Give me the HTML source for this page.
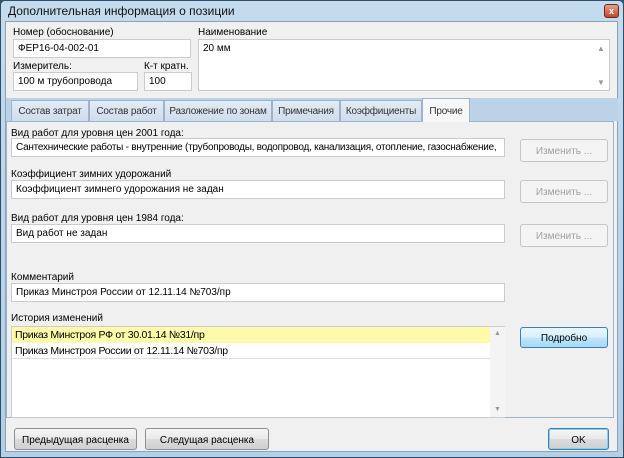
<!DOCTYPE html>
<html><head><meta charset="utf-8"><style>
*{margin:0;padding:0;box-sizing:border-box}
body{width:624px;height:458px;overflow:hidden;background:#2a5a78;font-family:"Liberation Sans","Noto Sans CJK SC",sans-serif;font-size:10px;color:#000}
.a{position:absolute;white-space:nowrap}
.win{position:absolute;left:0;top:0;width:624px;height:458px;background:linear-gradient(#c4dbed,#b4cfe6);border:1px solid #2d4e66;border-radius:5px 5px 0 0}
.client{position:absolute;left:5px;top:21px;width:613px;height:431px;background:#f0f0f0;border:1px solid #8aa3b8}
.inp{position:absolute;background:#fff;border:1px solid #c8ccd0;padding:3px 4px;white-space:nowrap;overflow:hidden}
.btn{position:absolute;border:1px solid #8e8f8f;border-radius:3px;background:linear-gradient(#f5f5f5 0,#e9e9e9 50%,#dcdcdc 51%,#d0d0d0);text-align:center;white-space:nowrap}
.dis{border-color:#c5c5c5;background:#f4f4f4;color:#a0a0a0}
.tab{position:absolute;top:100px;height:21px;border:1px solid #9fb3c8;border-bottom:none;background:linear-gradient(#e2ecf6,#cfdced);text-align:center;padding-top:5px;color:#333;white-space:nowrap;letter-spacing:-0.2px}
.li{font-size:10.5px;letter-spacing:-0.3px}
</style></head><body>
<div class="win"></div>
<div class="a" style="left:8px;top:4px;font-size:12px;color:#111">Дополнительная информация о позиции</div>
<div class="a" style="left:604px;top:4px;width:15px;height:14px;border:1px solid #6b2a1e;border-radius:3px;background:linear-gradient(#e7a08a,#c4452b);color:#fff;font-size:9px;text-align:center;line-height:12px;font-weight:bold">x</div>
<div class="client"></div>
<div class="a" style="left:13px;top:27px">Номер (обоснование)</div>
<div class="inp" style="left:13px;top:39px;width:178px;height:19px">ФЕР16-04-002-01</div>
<div class="a" style="left:198px;top:27px">Наименование</div>
<div class="inp" style="left:198px;top:39px;width:412px;height:52px">20 мм</div>
<div class="a" style="left:597px;top:44px;color:#999;font-size:8px">▲</div>
<div class="a" style="left:597px;top:78px;color:#999;font-size:8px">▼</div>
<div class="a" style="left:13px;top:61px">Измеритель:</div>
<div class="inp" style="left:13px;top:72px;width:125px;height:19px">100 м трубопровода</div>
<div class="a" style="left:144px;top:61px">К-т кратн.</div>
<div class="inp" style="left:144px;top:72px;width:48px;height:19px">100</div>
<div class="a" style="left:6px;top:98px;width:612px;height:23px;background:#bcd2e8"></div>
<div class="tab" style="left:11px;width:78px">Состав затрат</div>
<div class="tab" style="left:89px;width:75px">Состав работ</div>
<div class="tab" style="left:164px;width:108px">Разложение по зонам</div>
<div class="tab" style="left:272px;width:68px">Примечания</div>
<div class="tab" style="left:340px;width:82px">Коэффициенты</div>
<div class="tab" style="left:422px;top:98px;height:24px;width:48px;background:#f7f7f7;z-index:2;padding-top:7px">Прочие</div>
<div class="a" style="left:6px;top:121px;width:608px;height:297px;border:1px solid #9fb3c8;background:#f0f0f0"></div>
<div class="a" style="left:11px;top:128px">Вид работ для уровня цен 2001 года:</div>
<div class="inp" style="left:11px;top:138px;width:494px;height:19px;letter-spacing:-0.25px">Сантехнические работы - внутренние (трубопроводы, водопровод, канализация, отопление, газоснабжение,</div>
<div class="btn dis" style="left:520px;top:139px;width:88px;height:23px;padding-top:6px">Изменить ...</div>
<div class="a" style="left:11px;top:169px">Коэффициент зимних удорожаний</div>
<div class="inp" style="left:11px;top:180px;width:494px;height:19px">Коэффициент зимнего удорожания не задан</div>
<div class="btn dis" style="left:520px;top:180px;width:88px;height:23px;padding-top:6px">Изменить ...</div>
<div class="a" style="left:11px;top:213px">Вид работ для уровня цен 1984 года:</div>
<div class="inp" style="left:11px;top:224px;width:494px;height:19px">Вид работ не задан</div>
<div class="btn dis" style="left:520px;top:224px;width:88px;height:23px;padding-top:6px">Изменить ...</div>
<div class="a" style="left:11px;top:272px">Комментарий</div>
<div class="inp" style="left:11px;top:283px;width:494px;height:19px">Приказ Минстроя России от 12.11.14 №703/пр</div>
<div class="a" style="left:11px;top:313px">История изменений</div>
<div class="a" style="left:11px;top:326px;width:494px;height:92px;background:#fff;border:1px solid #c8ccd0"></div>
<div class="a li" style="left:12px;top:327px;width:478px;height:16px;background:#fdfaa8;padding:2px 3px">Приказ Минстроя РФ от 30.01.14 №31/пр</div>
<div class="a li" style="left:12px;top:343px;width:478px;height:16px;border-bottom:1px solid #ddd;padding:2px 3px">Приказ Минстроя России от 12.11.14 №703/пр</div>
<div class="a" style="left:490px;top:327px;width:15px;height:90px;background:#f4f4f4"></div>
<div class="a" style="left:494px;top:330px;color:#999;font-size:7px">▲</div>
<div class="a" style="left:494px;top:406px;color:#999;font-size:7px">▼</div>
<div class="btn" style="left:520px;top:327px;width:88px;height:21px;padding-top:5px;border-color:#3c7fb1;background:linear-gradient(#eaf6fd,#d9f0fc 50%,#bee6fd 51%,#a7d9f5)">Подробно</div>
<div class="btn" style="left:14px;top:428px;width:123px;height:22px;padding-top:6px">Предыдущая расценка</div>
<div class="btn" style="left:145px;top:428px;width:124px;height:22px;padding-top:6px">Следущая расценка</div>
<div class="btn" style="left:548px;top:428px;width:61px;height:22px;padding-top:6px;border-color:#3c7fb1;box-shadow:inset 0 0 0 1px #7ed3f5">OK</div>
</body></html>
